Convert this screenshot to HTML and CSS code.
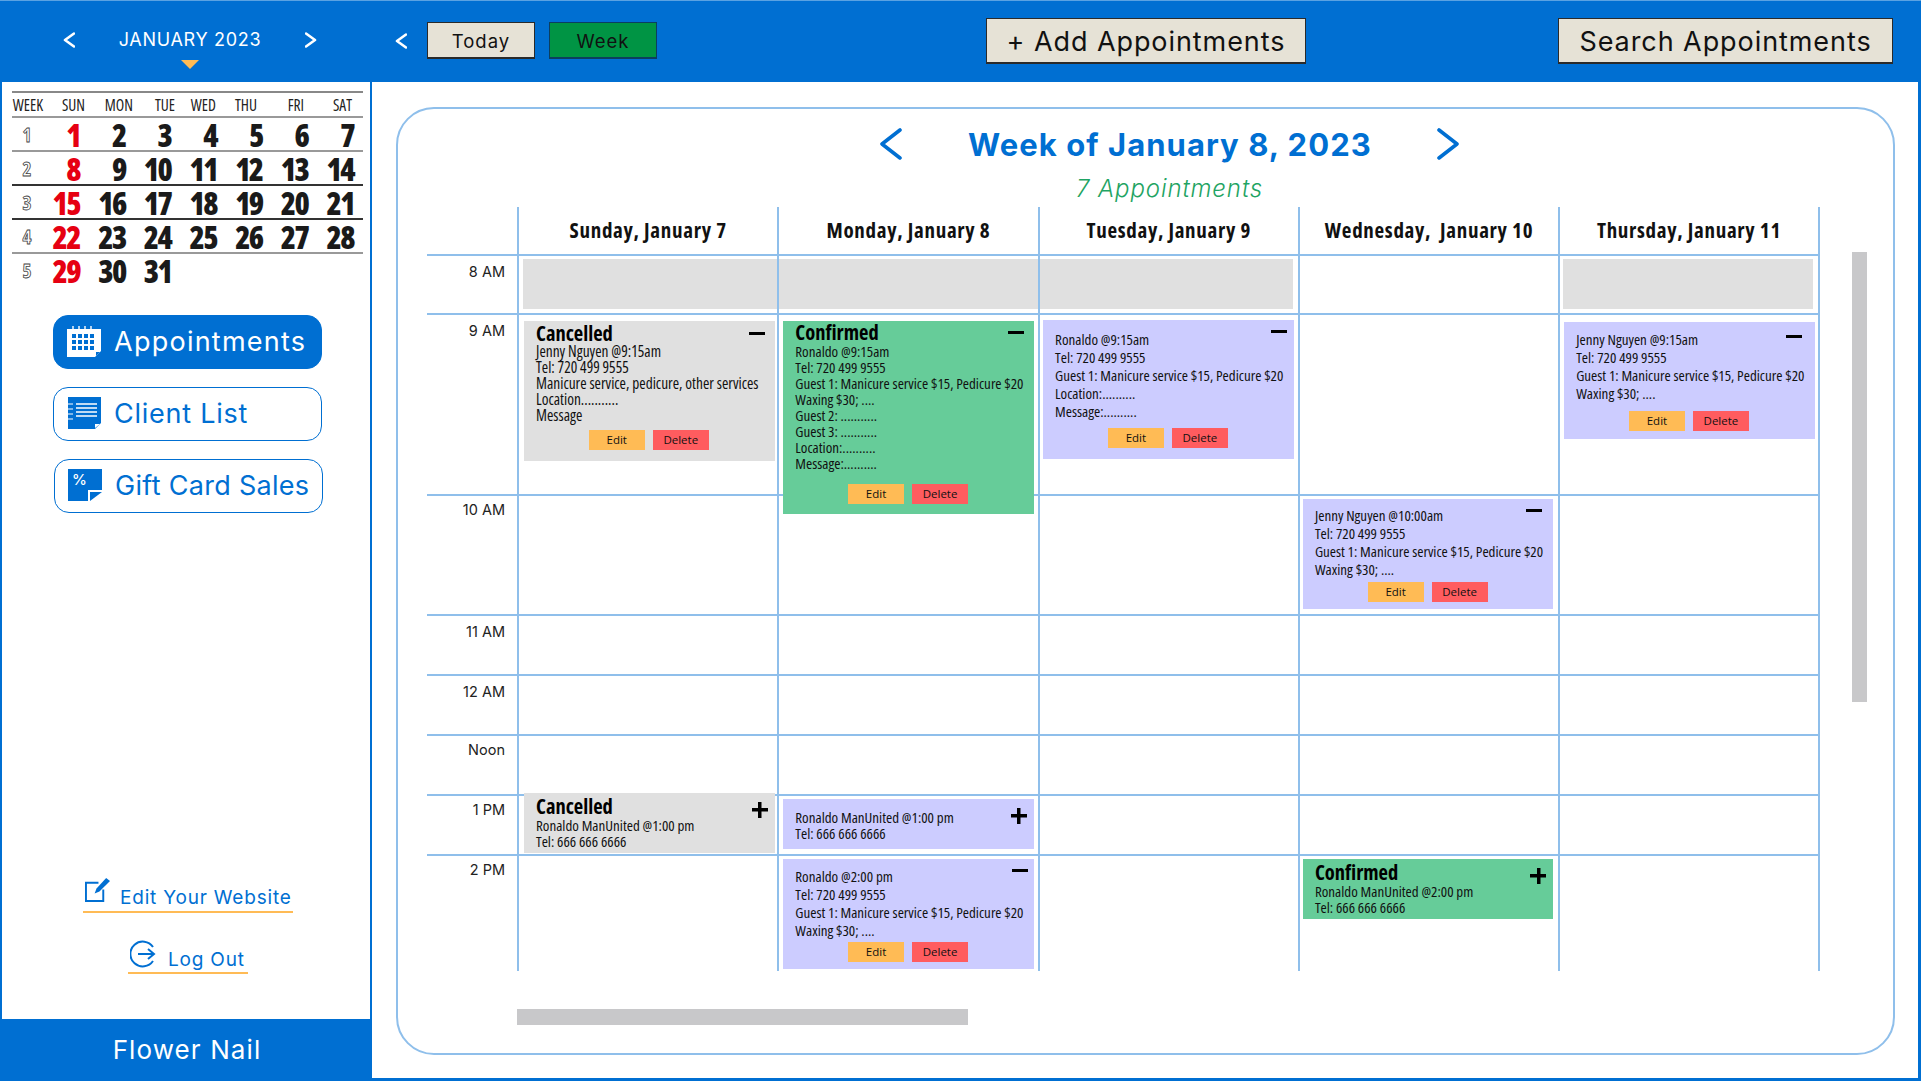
FILE: index.html

```html
<!DOCTYPE html>
<html lang="en">
<head>
  <meta charset="UTF-8" />
  <title>Appointments - Flower Nail</title>
  <link rel="stylesheet" href="styles.css">
</head>
<body>
<div class="app">

  <!-- TOP BAR -->
  <div class="topbar">
    <div class="month-nav">
      <svg class="chev-sm" viewBox="0 0 12 16"><path d="M11 1.5 2 8l9 6.5"/></svg>
      <span class="month-name">JANUARY 2023</span>
      <svg class="chev-sm" viewBox="0 0 12 16"><path d="M1 1.5 10 8l-9 6.5"/></svg>
      <span class="month-caret"></span>
    </div>
    <div class="toolbar">
      <svg class="chev-sm" viewBox="0 0 12 16"><path d="M11 1.5 2 8l9 6.5"/></svg>
      <button class="btn btn-small">Today</button>
      <button class="btn btn-small btn-green">Week</button>
      <button class="btn btn-big btn-add">+ Add Appointments</button>
      <button class="btn btn-big btn-search">Search Appointments</button>
    </div>
  </div>

  <div class="content">

    <!-- SIDEBAR -->
    <div class="sidebar">
      <div class="cal">
        <div class="cal-head">
          <span>WEEK</span><span>SUN</span><span>MON</span><span>TUE</span><span>WED</span><span>THU</span><span>FRI</span><span>SAT</span>
        </div>
        <div class="cal-row"><span class="wk">1</span><span class="red">1</span><span>2</span><span>3</span><span>4</span><span>5</span><span>6</span><span>7</span></div>
        <div class="cal-row"><span class="wk">2</span><span class="red">8</span><span>9</span><span>10</span><span>11</span><span>12</span><span>13</span><span>14</span></div>
        <div class="cal-row dark"><span class="wk">3</span><span class="red">15</span><span>16</span><span>17</span><span>18</span><span>19</span><span>20</span><span>21</span></div>
        <div class="cal-row dark"><span class="wk">4</span><span class="red">22</span><span>23</span><span>24</span><span>25</span><span>26</span><span>27</span><span>28</span></div>
        <div class="cal-row"><span class="wk">5</span><span class="red">29</span><span>30</span><span>31</span></div>
      </div>

      <div class="side-nav">
        <a class="side-btn active" href="#">
          <svg class="side-icon" viewBox="0 0 34 32">
            <path fill="currentColor" d="M0 4h34v22l-6 6H0z"/>
            <path fill="none" stroke="currentColor" stroke-width="1.4" d="M6 5V1M12 5V1M18 5V1M24 5V1"/>
            <path class="cut" d="M5 9h4v4H5zM11 9h4v4h-4zM17 9h4v4h-4zM23 9h4v4h-4zM5 15h4v4H5zM11 15h4v4h-4zM17 15h4v4h-4zM23 15h4v4h-4zM5 21h4v4H5zM11 21h4v4h-4zM17 21h4v4h-4zM23 21h4v4h-4zM29 27h4l-4 4z"/>
          </svg>
          Appointments
        </a>
        <a class="side-btn" href="#">
          <svg class="side-icon" viewBox="0 0 34 32">
            <path fill="currentColor" d="M1 0h33v26l-6 6H1z"/>
            <path fill="none" stroke="#fff" stroke-width="1.4" d="M9 7h21M9 11h21M9 15h21M9 19h21"/>
            <path fill="none" stroke="#fff" stroke-width="1" d="M1 7h5M1 12h5M1 17h5M1 22h5"/>
            <path fill="#fff" d="M28 27h5l-5 4z"/>
          </svg>
          Client List
        </a>
        <a class="side-btn gift" href="#">
          <svg class="side-icon" viewBox="0 0 34 32">
            <path fill="currentColor" d="M0 0h34v21H20v11H0z"/>
            <path fill="currentColor" d="M22 23h12L22 32z"/>
            <text class="pct" x="4" y="16">%</text>
          </svg>
          Gift Card Sales
        </a>
      </div>

      <div class="side-links">
        <a class="side-link link-edit" href="#">
          <svg class="link-icon" viewBox="0 0 26 26">
            <path fill="none" stroke="currentColor" stroke-width="2" d="M14 5H1v19h18V12"/>
            <path fill="currentColor" d="M22 0l4 3-11 11-5 2 2-5z"/>
          </svg>
          Edit Your Website
        </a>
        <a class="side-link link-out" href="#">
          <svg class="link-icon" viewBox="0 0 26 28">
            <path fill="none" stroke="currentColor" stroke-width="2" d="M23 7A12.4 12.4 0 1 0 23 21"/>
            <path fill="none" stroke="currentColor" stroke-width="2" d="M8 14h16M18 9l6 5-6 5"/>
          </svg>
          Log Out
        </a>
      </div>

      <div class="side-footer">Flower Nail</div>
    </div>

    <!-- WEEK VIEW -->
    <div class="main">
      <div class="panel">
        <div class="week-title">
          <svg class="chev-lg" viewBox="0 0 24 32"><path d="M21 2 3 16l18 14"/></svg>
          <h1>Week of January 8, 2023</h1>
          <svg class="chev-lg" viewBox="0 0 24 32"><path d="M3 2l18 14L3 30"/></svg>
        </div>
        <div class="week-count">7 Appointments</div>

        <div class="panel-body">
          <div class="week-grid">
            <!-- header -->
            <div class="time head"></div>
            <div class="day head">Sunday, January 7</div>
            <div class="day head">Monday, January 8</div>
            <div class="day head">Tuesday, January 9</div>
            <div class="day head">Wednesday,&nbsp; January 10</div>
            <div class="day head last">Thursday, January 11</div>

            <!-- 8 AM -->
            <div class="time low">8 AM</div>
            <div class="day"><div class="closed closed-l"></div></div>
            <div class="day"><div class="closed"></div></div>
            <div class="day"><div class="closed closed-r"></div></div>
            <div class="day"></div>
            <div class="day last"><div class="closed closed-one"></div></div>

            <!-- 9 AM -->
            <div class="time low">9 AM</div>
            <div class="day sun">
              <div class="card grey c-sun9">
                <span class="minus"></span>
                <div class="card-title">Cancelled</div>
                <p>Jenny Nguyen @9:15am</p>
                <p>Tel: 720 499 9555</p>
                <p>Manicure service, pedicure, other services</p>
                <p>Location...........</p>
                <p>Message</p>
                <div class="card-btns"><span class="edit">Edit</span><span class="del">Delete</span></div>
              </div>
            </div>
            <div class="day mon">
              <div class="card green c-mon9">
                <span class="minus"></span>
                <div class="card-title">Confirmed</div>
                <p>Ronaldo @9:15am</p>
                <p>Tel: 720 499 9555</p>
                <p>Guest 1: Manicure service $15, Pedicure $20</p>
                <p>Waxing $30; ....</p>
                <p>Guest 2: ...........</p>
                <p>Guest 3: ...........</p>
                <p>Location:..........</p>
                <p>Message:..........</p>
                <div class="card-btns"><span class="edit">Edit</span><span class="del">Delete</span></div>
              </div>
            </div>
            <div class="day tue">
              <div class="card purple c-tue9">
                <span class="minus"></span>
                <p>Ronaldo @9:15am</p>
                <p>Tel: 720 499 9555</p>
                <p>Guest 1: Manicure service $15, Pedicure $20</p>
                <p>Location:..........</p>
                <p>Message:..........</p>
                <div class="card-btns"><span class="edit">Edit</span><span class="del">Delete</span></div>
              </div>
            </div>
            <div class="day"></div>
            <div class="day thu last">
              <div class="card purple c-thu9">
                <span class="minus"></span>
                <p>Jenny Nguyen @9:15am</p>
                <p>Tel: 720 499 9555</p>
                <p>Guest 1: Manicure service $15, Pedicure $20</p>
                <p>Waxing $30; ....</p>
                <div class="card-btns"><span class="edit">Edit</span><span class="del">Delete</span></div>
              </div>
            </div>

            <!-- 10 AM -->
            <div class="time">10 AM</div>
            <div class="day"></div>
            <div class="day"></div>
            <div class="day"></div>
            <div class="day wed">
              <div class="card purple c-wed10">
                <span class="minus"></span>
                <p>Jenny Nguyen @10:00am</p>
                <p>Tel: 720 499 9555</p>
                <p>Guest 1: Manicure service $15, Pedicure $20</p>
                <p>Waxing $30; ....</p>
                <div class="card-btns"><span class="edit">Edit</span><span class="del">Delete</span></div>
              </div>
            </div>
            <div class="day last"></div>

            <!-- 11 AM -->
            <div class="time low">11 AM</div>
            <div class="day"></div><div class="day"></div><div class="day"></div><div class="day"></div><div class="day last"></div>

            <!-- 12 AM -->
            <div class="time low">12 AM</div>
            <div class="day"></div><div class="day"></div><div class="day"></div><div class="day"></div><div class="day last"></div>

            <!-- Noon -->
            <div class="time">Noon</div>
            <div class="day"></div><div class="day"></div><div class="day"></div><div class="day"></div><div class="day last"></div>

            <!-- 1 PM -->
            <div class="time">1 PM</div>
            <div class="day sun">
              <div class="card grey c-sun1">
                <span class="plus"></span>
                <div class="card-title">Cancelled</div>
                <p>Ronaldo ManUnited @1:00 pm</p>
                <p>Tel: 666 666 6666</p>
              </div>
            </div>
            <div class="day mon">
              <div class="card purple c-mon1">
                <span class="plus"></span>
                <p>Ronaldo ManUnited @1:00 pm</p>
                <p>Tel: 666 666 6666</p>
              </div>
            </div>
            <div class="day"></div>
            <div class="day"></div>
            <div class="day last"></div>

            <!-- 2 PM -->
            <div class="time">2 PM</div>
            <div class="day"></div>
            <div class="day mon">
              <div class="card purple c-mon2">
                <span class="minus"></span>
                <p>Ronaldo @2:00 pm</p>
                <p>Tel: 720 499 9555</p>
                <p>Guest 1: Manicure service $15, Pedicure $20</p>
                <p>Waxing $30; ....</p>
                <div class="card-btns"><span class="edit">Edit</span><span class="del">Delete</span></div>
              </div>
            </div>
            <div class="day"></div>
            <div class="day wed">
              <div class="card green c-wed2">
                <span class="plus"></span>
                <div class="card-title">Confirmed</div>
                <p>Ronaldo ManUnited @2:00 pm</p>
                <p>Tel: 666 666 6666</p>
              </div>
            </div>
            <div class="day last"></div>
          </div>
          <div class="vscroll"></div>
        </div>
        <div class="hscroll"></div>
      </div>
    </div>
  </div>
</div>
</body>
</html>
```

FILE: styles.css

```css
:root {
  --blue: #006fd2;
  --line: #8fbfeb;
  --beige: #e6e2d6;
  --orange: #ffbb55;
  --wide: Inter, "Noto Sans", sans-serif;
  --narrow: "Open Sans", "Noto Sans", sans-serif;
}

* {
  box-sizing: border-box;
}

body {
  margin: 0;
  background: #fff;
  font-family: var(--wide);
}

.app {
  width: 1921px;
  height: 1081px;
  background: var(--blue);
  border-top: 1px solid #5aa2e2;
  display: flex;
  flex-direction: column;
  overflow: hidden;
}

/* TOP BAR */
.topbar {
  height: 81px;
  display: flex;
  flex-shrink: 0;
}

.month-nav {
  width: 372px;
  position: relative;
  display: flex;
  align-items: center;
  padding: 0 55px 4px 63px;
  justify-content: space-between;
  color: #fff;
}

.month-name {
  font-size: 18px;
  letter-spacing: 0.7px;
}

.month-caret {
  position: absolute;
  left: 181px;
  top: 59px;
  width: 0;
  height: 0;
  border-left: 9px solid transparent;
  border-right: 9px solid transparent;
  border-top: 9px solid var(--orange);
}

.chev-sm {
  width: 12px;
  height: 16px;
}

.chev-sm path,
.chev-lg path {
  fill: none;
  stroke: currentColor;
  stroke-width: 2.6;
  stroke-linecap: round;
  stroke-linejoin: round;
}

.toolbar {
  flex: 1;
  display: flex;
  align-items: center;
  color: #fff;
  padding-left: 23px;
  padding-bottom: 2px;
}

.btn {
  font-family: var(--wide);
  color: #111;
  background: var(--beige);
  border: 1px solid #2a2a2a;
  border-bottom-width: 2px;
  padding: 2px 0 0;
}

.btn-small {
  width: 108px;
  height: 37px;
  font-size: 18.5px;
  letter-spacing: 1px;
  margin-left: 14px;
}

.toolbar .chev-sm + .btn-small {
  margin-left: 20px;
}

.btn-green {
  background: #009444;
  border-color: #0b3f5f;
}

.btn-big {
  height: 46px;
  font-size: 27px;
  letter-spacing: 0.93px;
  padding-top: 3px;
}

.btn-add {
  width: 320px;
  margin-left: 329px;
}

.btn-search {
  width: 335px;
  margin-left: 252px;
}

.content {
  flex: 1;
  min-height: 0;
  display: flex;
  padding: 0 3px 3px 2px;
}

/* SIDEBAR */
.sidebar {
  width: 368px;
  background: #fff;
  display: flex;
  flex-direction: column;
  margin-right: 2px;
  padding-top: 9px;
}

.cal {
  margin: 0 7px 0 10px;
  border-top: 2px solid #888;
  font-family: var(--narrow);
  font-stretch: 75%;
}

.cal-head {
  height: 23px;
  display: grid;
  grid-template-columns: 31px 42px 48px 42px 41px 41px 47px 48px;
  align-items: center;
  font-size: 15.5px;
  color: #222;
  text-align: right;
}

.cal-row {
  height: 34px;
  border-top: 2px solid #999;
  padding-top: 1px;
  display: grid;
  grid-template-columns: 32px 36px repeat(6, 45.67px);
  align-items: center;
  text-align: right;
  font-size: 31px;
  font-weight: 800;
  letter-spacing: -1.6px;
  line-height: 30px;
  color: #1a1a1a;
}

.cal-row.dark {
  border-top-color: #333;
}

.cal-row .red {
  color: #e60012;
}

.cal-row .wk {
  text-align: center;
  font-size: 19px;
  font-weight: 700;
  letter-spacing: 0;
  color: #fff;
  -webkit-text-stroke: 0.8px #444;
  padding-right: 2px;
}

.side-nav {
  margin: 29px 0 0 51px;
  display: flex;
  flex-direction: column;
  gap: 18px;
}

.side-btn {
  width: 269px;
  height: 54px;
  border: 1px solid var(--blue);
  border-radius: 15px;
  display: flex;
  align-items: center;
  padding: 0 0 2px 13px;
  gap: 13px;
  color: var(--blue);
  text-decoration: none;
  white-space: nowrap;
  font-size: 27px;
  letter-spacing: 0.75px;
}

.side-btn.active {
  background: var(--blue);
  color: #fff;
  letter-spacing: 1.25px;
}

.side-btn.gift {
  margin-left: 1px;
  letter-spacing: 0.3px;
}

.side-icon {
  width: 34px;
  height: 32px;
  flex-shrink: 0;
}

.cut {
  fill: var(--blue);
}

.pct {
  font-family: var(--wide);
  font-size: 15px;
  font-weight: 500;
  letter-spacing: 0;
  fill: #fff;
}

.side-links {
  margin-top: auto;
  padding: 0 0 45px 4px;
  display: flex;
  flex-direction: column;
  align-items: center;
  gap: 27px;
}

.side-link {
  display: flex;
  align-items: flex-end;
  color: var(--blue);
  text-decoration: none;
  font-size: 19px;
  line-height: 22px;
  letter-spacing: 0.8px;
  border-bottom: 2px solid var(--orange);
}

.link-edit {
  width: 210px;
  padding: 0 0 2px 2px;
  gap: 10px;
}

.link-edit .link-icon {
  width: 25px;
  height: 25px;
  margin-bottom: 6px;
}

.link-out {
  width: 120px;
  padding: 0 0 1px 2px;
  gap: 12px;
}

.link-out .link-icon {
  width: 26px;
  height: 28px;
  margin-bottom: 3px;
}

.side-footer {
  height: 59px;
  background: var(--blue);
  color: #fff;
  font-size: 26px;
  letter-spacing: 1.1px;
  margin-left: -2px;
  margin-right: -2px;
  display: flex;
  align-items: center;
  justify-content: center;
  padding: 2px 0 0 2px;
}

/* WEEK VIEW */
.main {
  flex: 1;
  background: #fff;
  padding: 25px 23px 23px 24px;
}

.panel {
  height: 100%;
  border: 2px solid var(--line);
  border-radius: 38px;
  padding: 16px 0 0 29px;
}

.week-title {
  height: 40px;
  margin-left: 90px;
  width: 1305px;
  padding-bottom: 2px;
  display: flex;
  align-items: center;
  justify-content: center;
  gap: 65px;
  color: var(--blue);
}

.week-title h1 {
  margin: 0;
  width: 403px;
  text-align: center;
  white-space: nowrap;
  font-size: 31px;
  font-weight: 700;
  letter-spacing: 1.05px;
}

.chev-lg {
  width: 24px;
  height: 32px;
}

.chev-lg path {
  stroke-width: 3.6;
}

.week-count {
  height: 30px;
  line-height: 30px;
  margin: 9px 0 0 90px;
  width: 1305px;
  text-align: center;
  font-size: 24px;
  font-weight: 300;
  font-style: italic;
  color: #1fa463;
  letter-spacing: 0.9px;
}

.panel-body {
  display: flex;
  margin-top: 3px;
}

.week-grid {
  width: 1393px;
  flex-shrink: 0;
  display: grid;
  grid-template-columns: 90px repeat(4, 260.3px) 261.5px;
  grid-template-rows: 47px 59px 181px 120px 60px 60px 60px 60px 117px;
}

.time {
  border-top: 2px solid var(--line);
  text-align: right;
  padding: 5px 12px 0 0;
  font-size: 14.5px;
  line-height: 18px;
  color: #222;
}

.time.low {
  padding-top: 7px;
}

.day {
  border-top: 2px solid var(--line);
  border-left: 2px solid var(--line);
  min-width: 0;
}

.day.last {
  border-right: 2px solid var(--line);
}

.head {
  border-top: 0;
  font-family: var(--narrow);
  font-stretch: 75%;
  font-weight: 700;
  font-size: 21px;
  letter-spacing: 0.7px;
  color: #111;
  text-align: center;
  line-height: 46px;
  padding: 0;
  white-space: nowrap;
}

.closed {
  height: 50px;
  margin: 3px 0 0;
  background: #e0e0e0;
}

.closed-l {
  margin-left: 4px;
}

.closed-r {
  margin-right: 5px;
}

.closed-one {
  margin: 3px 5px 0 3px;
}

.card {
  position: relative;
  width: 250.5px;
  padding-left: 12px;
  font-family: var(--narrow);
  font-stretch: 75%;
  font-size: 15px;
  line-height: 18px;
  color: #111;
}

.sun .card { margin-left: 5px; }
.mon .card { margin-left: 4px; }
.tue .card { margin-left: 3.5px; }
.wed .card { margin-left: 3px; }
.thu .card { margin-left: 4px; }

.card p {
  margin: 0;
  white-space: nowrap;
}

.card.grey { background: #e0e0e0; }
.card.green { background: #66cc99; }
.card.purple { background: #ccccff; }

.card-title {
  font-size: 20.5px;
  font-weight: 700;
  line-height: 22px;
  color: #000;
}

.c-sun9, .c-mon9, .c-sun1, .c-mon1, .c-wed2 {
  line-height: 16px;
}

.c-sun9 { margin-top: 6px; padding: 1px 0 11px 12px; font-size: 15.4px; }
.c-mon9 { margin-top: 6px; padding: 0 0 10px 12px; }
.c-mon9 .card-btns { margin-top: 13px; }
.c-tue9 { margin-top: 5px; padding: 10px 0 11px 12px; }
.c-tue9 .card-btns { margin-top: 8px; }
.c-thu9 { margin-top: 7px; padding: 8px 0 8px 12px; }
.c-thu9 .card-btns { margin-top: 9px; }
.c-wed10 { margin-top: 3px; padding: 7px 0 7px 12px; }
.c-wed10 .card-btns { margin-top: 4px; }
.c-sun1 { margin-top: -3px; height: 60px; padding-top: 2px; }
.c-mon1 { margin-top: 3px; height: 50px; padding-top: 10px; }
.c-mon2 { margin-top: 3px; padding: 8px 0 7px 12px; }
.c-mon2 .card-btns { margin-top: 3px; }
.c-wed2 { margin-top: 3px; height: 60px; padding-top: 2px; }

.card-btns {
  margin-top: 6px;
  display: flex;
  justify-content: center;
  gap: 8px;
  padding-right: 13px;
  font-size: 11.5px;
  font-stretch: 100%;
  line-height: 20px;
  text-align: center;
}

.card-btns span {
  width: 56px;
  height: 20px;
}

.edit { background: var(--orange); }
.del { background: #ff5c5f; }

.minus {
  position: absolute;
  top: 10px;
  right: 10px;
  width: 16px;
  height: 3px;
  background: #000;
}

.c-sun9 .minus { top: 11px; }
.c-tue9 .minus { right: 7px; }
.c-thu9 .minus { top: 13px; right: 13px; }
.c-wed10 .minus { right: 11px; }
.c-mon2 .minus { right: 6px; }

.plus {
  position: absolute;
  top: 9px;
  right: 7px;
  width: 16px;
  height: 16px;
  background:
    linear-gradient(#000, #000) center / 100% 3.5px no-repeat,
    linear-gradient(#000, #000) center / 3.5px 100% no-repeat;
}

.vscroll {
  width: 15px;
  height: 450px;
  margin: 45px 0 0 32px;
  flex-shrink: 0;
  background: #c8c8ca;
}

.hscroll {
  width: 451px;
  height: 16px;
  margin: 38px 0 0 90px;
  background: #c8c8ca;
}
```
